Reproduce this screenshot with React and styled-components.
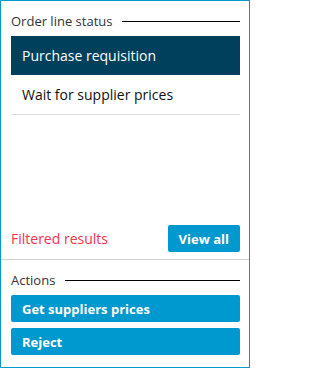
import React from "react";
import styled, { createGlobalStyle } from "styled-components";

const Global = createGlobalStyle`
  html, body { margin: 0; padding: 0; background: #fff; }
  body { font-family: "Open Sans", "Noto Sans", sans-serif; }
  * { box-sizing: border-box; }
`;

const Panel = styled.div`
  width: 250px;
  height: 368px;
  border: 1px solid #0099cf;
  display: flex;
  flex-direction: column;
  background: #fff;
`;

const Section = styled.div`
  padding: ${(p) => p.$pad};
  flex: ${(p) => (p.$grow ? 1 : "none")};
  display: flex;
  flex-direction: column;
`;

const SectionTitle = styled.div`
  display: flex;
  align-items: center;
  height: 20px;
  font-size: 13px;
  color: #333;
  gap: 10px;
  &::after {
    content: "";
    flex: 1;
    height: 1px;
    background: #000;
    margin-top: 1px;
  }
`;

const List = styled.ul`
  list-style: none;
  margin: 5px 0 0;
  padding: 0;
`;

const Item = styled.li`
  height: ${(p) => (p.$last ? 40 : 39)}px;
  display: flex;
  align-items: center;
  padding-left: 11px;
  font-size: 14px;
  color: ${(p) => (p.$active ? "#fff" : "#111")};
  background: ${(p) => (p.$active ? "#00405d" : "transparent")};
  border-bottom: ${(p) => (p.$last ? "1px solid #dedede" : "none")};
`;

const Footer = styled.div`
  display: flex;
  align-items: center;
  justify-content: space-between;
  padding: 0 9px 7px 10px;
`;

const Filtered = styled.span`
  color: #f5344e;
  font-size: 14px;
`;

const Button = styled.button`
  border: none;
  border-radius: 2px;
  background: #0099cf;
  color: #fff;
  font-family: "Open Sans", "Noto Sans", sans-serif;
  font-weight: 700;
  font-size: 13px;
  height: 27px;
  padding: 0 11px;
  width: ${(p) => (p.$block ? "100%" : "auto")};
  text-align: ${(p) => (p.$block ? "left" : "center")};
  cursor: pointer;
`;

const Divider = styled.div`
  height: 1px;
  background: #d0d0d0;
`;

const Buttons = styled.div`
  display: flex;
  flex-direction: column;
  gap: 6px;
  margin-top: 5px;
`;

export default function App() {
  return (
    <>
      <Global />
      <Panel>
        <Section $grow $pad="10px 9px 0 10px">
          <SectionTitle>Order line status</SectionTitle>
          <List>
            <Item $active>Purchase requisition</Item>
            <Item $last>Wait for supplier prices</Item>
          </List>
        </Section>
        <Footer>
          <Filtered>Filtered results</Filtered>
          <Button>View all</Button>
        </Footer>
        <Divider />
        <Section $pad="10px 9px 12px 10px">
          <SectionTitle>Actions</SectionTitle>
          <Buttons>
            <Button $block>Get suppliers prices</Button>
            <Button $block>Reject</Button>
          </Buttons>
        </Section>
      </Panel>
    </>
  );
}
